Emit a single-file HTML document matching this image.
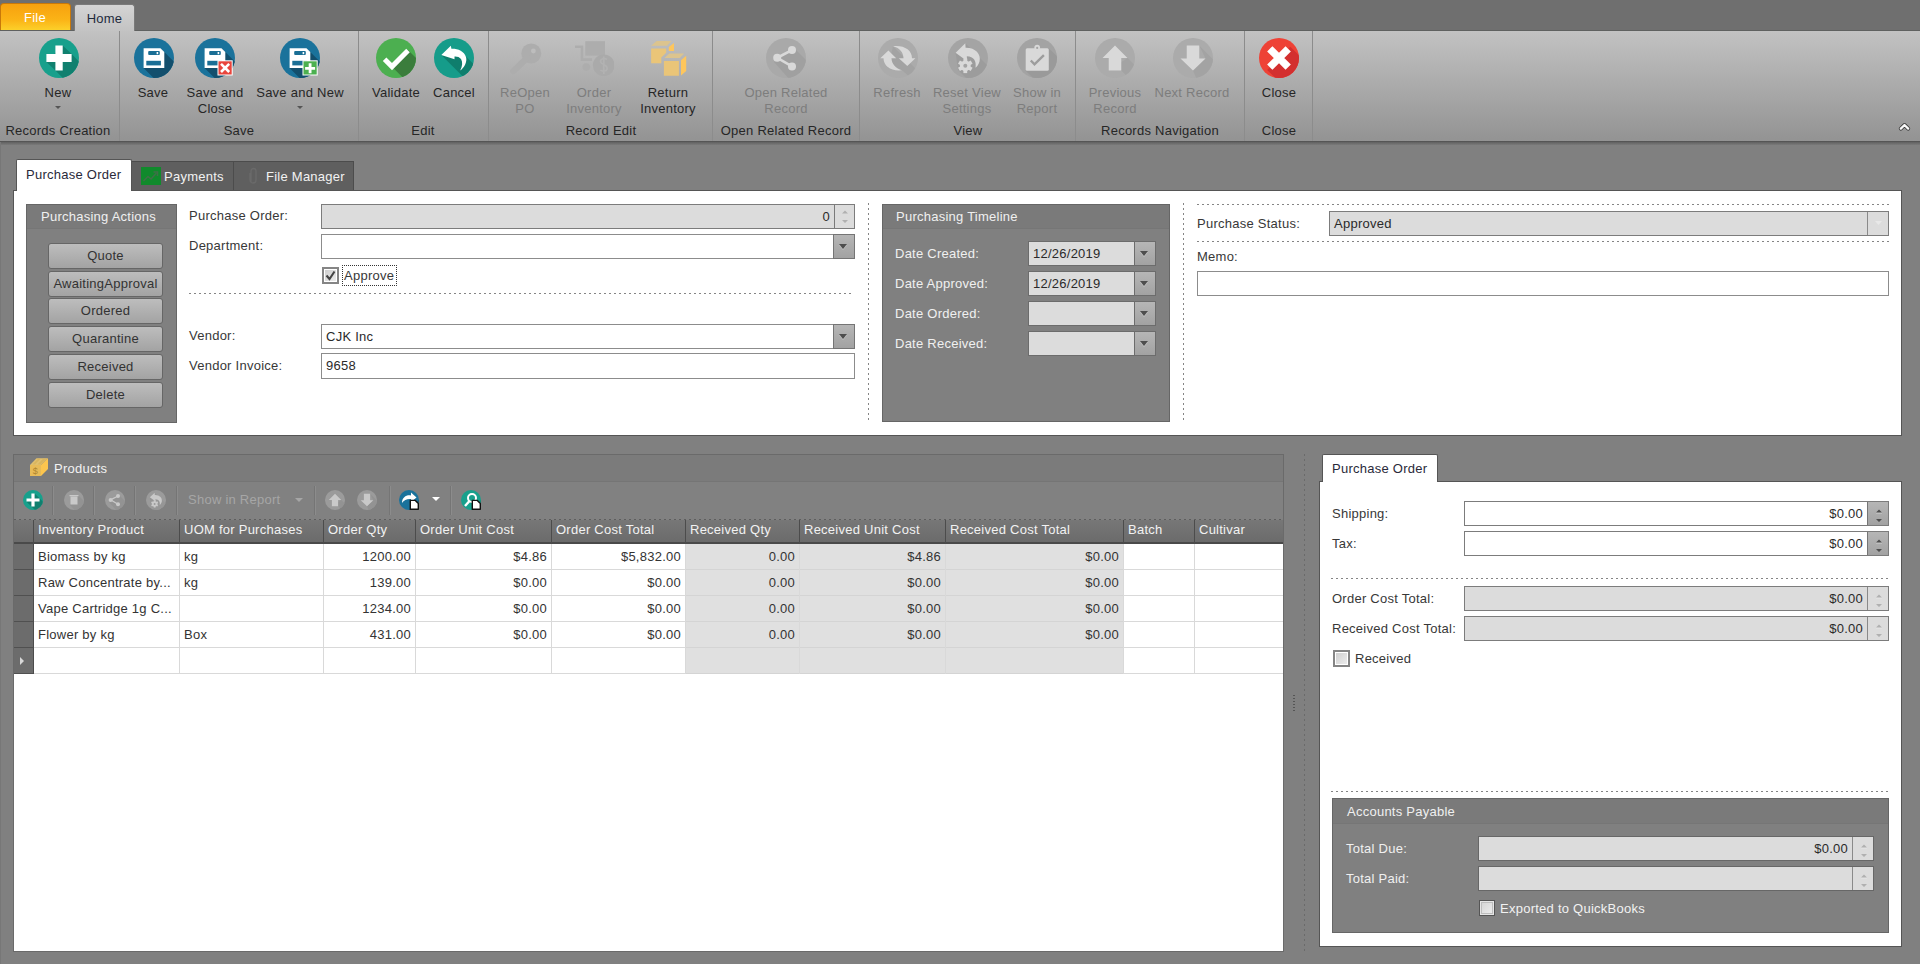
<!DOCTYPE html>
<html><head><meta charset="utf-8"><style>
*{box-sizing:border-box;margin:0;padding:0}
html,body{width:1920px;height:964px;overflow:hidden;background:#808080;font-family:"Liberation Sans",sans-serif;font-size:13px;color:#2a2a2a;letter-spacing:0.25px}
.a{position:absolute}
.t{position:absolute;white-space:nowrap;line-height:16px}
.c{text-align:center}
.r{text-align:right}
#top{left:0;top:0;width:1920px;height:31px;background:#6f6f6f}
#ribbon{left:0;top:30px;width:1920px;height:112px;background:linear-gradient(#c2c2c2,#939393);border-top:1px solid #5f6160;border-bottom:1px solid #555}
.sep{position:absolute;top:31px;width:1px;height:110px;background:#8c8c8c}
.lbl{position:absolute;line-height:16px;text-align:center;white-space:nowrap;color:#262626}
.dis{color:#7d7d7d}
.glbl{position:absolute;top:123px;line-height:16px;text-align:center;white-space:nowrap;color:#262626}
.ico{position:absolute;width:40px;height:40px;top:38px}
.page{position:absolute;background:#fff;border:1px solid #555}
.grp{position:absolute;background:#808080;border:1px solid #666}
.grph{position:absolute;left:0;top:0;right:0;height:24px;background:#7a7a7a;border-bottom:1px solid #767676;color:#f0f0f0;line-height:23px}
.btn{position:absolute;left:21px;width:115px;height:26px;border:1px solid #666;border-radius:3px;background:linear-gradient(#bdbdbd,#a3a3a3);text-align:center;line-height:24px;color:#333}
.fld{position:absolute;height:25px;border:1px solid #8c8c8c;background:#fff;line-height:23px;padding:0 4px;white-space:nowrap}
.fldd{background:#dcdcdc;border-color:#7c7c7c}
.flbl{position:absolute;line-height:24px;white-space:nowrap;color:#383838}
.wl{color:#f0f0f0}
.dd{position:absolute;right:-1px;top:-1px;bottom:-1px;width:22px;background:linear-gradient(#b6b6b6,#a2a2a2);border:1px solid #757575}
.dd:after{content:"";position:absolute;left:5px;top:9px;border-left:4.5px solid transparent;border-right:4.5px solid transparent;border-top:5px solid #4e4e4e;filter:drop-shadow(0 1px 0 #c4c4c4)}
.spin{position:absolute;right:0;top:0;bottom:0;width:20px;border-left:1px solid #b8b8b8}
.dotsh{position:absolute;height:1px;background-image:linear-gradient(90deg,#858585 2px,transparent 2px);background-size:5px 1px}
.dotsv{position:absolute;width:1px;background-image:linear-gradient(#858585 2px,transparent 2px);background-size:1px 5px}
</style></head><body>
<div id="top" class="a"></div>
<div id="ribbon" class="a"></div>
<div class="a" style="left:0px;top:3px;width:71px;height:27px;border-radius:4px 4px 0 0;background:linear-gradient(#f7a10e,#fbb316 60%,#fcd02a);border:1px solid #c8780a;border-bottom:none"></div>
<div class="t c" style="left:0px;top:10px;width:70px;color:#fff">File</div>
<div class="a" style="left:74px;top:4px;width:61px;height:27px;border-radius:3px 3px 0 0;background:linear-gradient(#d4d4d4,#c3c3c3);border:1px solid #7a7a7a;border-bottom:none"></div>
<div class="t c" style="left:74px;top:11px;width:61px;color:#1e2a3c">Home</div>
<div class="sep" style="left:119px"></div>
<div class="sep" style="left:358px"></div>
<div class="sep" style="left:488px"></div>
<div class="sep" style="left:712px"></div>
<div class="sep" style="left:859px"></div>
<div class="sep" style="left:1075px"></div>
<div class="sep" style="left:1244px"></div>
<div class="sep" style="left:1312px"></div>
<div class="glbl" style="left:-42px;width:200px">Records Creation</div>
<div class="glbl" style="left:139px;width:200px">Save</div>
<div class="glbl" style="left:323px;width:200px">Edit</div>
<div class="glbl" style="left:501px;width:200px">Record Edit</div>
<div class="glbl" style="left:686px;width:200px">Open Related Record</div>
<div class="glbl" style="left:868px;width:200px">View</div>
<div class="glbl" style="left:1060px;width:200px">Records Navigation</div>
<div class="glbl" style="left:1179px;width:200px">Close</div>
<div class="lbl" style="left:-2px;top:85px;width:120px">New</div>
<div class="a" style="left:55px;top:106px;border-left:3px solid transparent;border-right:3px solid transparent;border-top:3px solid #555"></div>
<div class="lbl" style="left:93px;top:85px;width:120px">Save</div>
<div class="lbl" style="left:155px;top:85px;width:120px">Save and</div>
<div class="lbl" style="left:155px;top:101px;width:120px">Close</div>
<div class="lbl" style="left:240px;top:85px;width:120px">Save and New</div>
<div class="a" style="left:297px;top:106px;border-left:3px solid transparent;border-right:3px solid transparent;border-top:3px solid #555"></div>
<div class="lbl" style="left:336px;top:85px;width:120px">Validate</div>
<div class="lbl" style="left:394px;top:85px;width:120px">Cancel</div>
<div class="lbl dis" style="left:465px;top:85px;width:120px">ReOpen</div>
<div class="lbl dis" style="left:465px;top:101px;width:120px">PO</div>
<div class="lbl dis" style="left:534px;top:85px;width:120px">Order</div>
<div class="lbl dis" style="left:534px;top:101px;width:120px">Inventory</div>
<div class="lbl" style="left:608px;top:85px;width:120px">Return</div>
<div class="lbl" style="left:608px;top:101px;width:120px">Inventory</div>
<div class="lbl dis" style="left:726px;top:85px;width:120px">Open Related</div>
<div class="lbl dis" style="left:726px;top:101px;width:120px">Record</div>
<div class="lbl dis" style="left:837px;top:85px;width:120px">Refresh</div>
<div class="lbl dis" style="left:907px;top:85px;width:120px">Reset View</div>
<div class="lbl dis" style="left:907px;top:101px;width:120px">Settings</div>
<div class="lbl dis" style="left:977px;top:85px;width:120px">Show in</div>
<div class="lbl dis" style="left:977px;top:101px;width:120px">Report</div>
<div class="lbl dis" style="left:1055px;top:85px;width:120px">Previous</div>
<div class="lbl dis" style="left:1055px;top:101px;width:120px">Record</div>
<div class="lbl dis" style="left:1132px;top:85px;width:120px">Next Record</div>
<div class="lbl" style="left:1219px;top:85px;width:120px">Close</div>
<svg class="ico" style="left:38.5px" viewBox="0 0 40 40"><defs><clipPath id="c1"><circle cx="20" cy="20" r="20"/></clipPath></defs><circle cx="20" cy="20" r="20" fill="#17a08c"/><g clip-path="url(#c1)"><path d="M23.7 7.4 L32.6 16 L62.6 46 L46.4 62.6 L16.4 32.6 L7.4 24 Z" fill="#10806f"/></g><path d="M16.4 7.4H23.7V16H32.6V24H23.7V32.6H16.4V24H7.4V16H16.4Z" fill="#fff"/></svg>
<svg class="ico" style="left:133.75px" viewBox="0 0 40 40"><defs><clipPath id="c2"><circle cx="20" cy="20" r="20"/></clipPath></defs><circle cx="20" cy="20" r="20" fill="#1a729b"/><g clip-path="url(#c2)"><path d="M26.5 10.2 L30.3 14 L60.3 44 L39.6 60 L9.6 30 Z" fill="#134f6d"/></g><g transform="translate(0,0)"><path d="M9.6 10.2H26.5L30.3 14V30H9.6Z" fill="#fff"/><rect x="14.2" y="13.1" width="11.6" height="4" rx="1" fill="#1a6e95"/><rect x="22.6" y="14" width="1.6" height="2.2" fill="#fff"/><rect x="12.3" y="22.8" width="14.6" height="4.6" fill="#1a6e95"/></g></svg>
<svg class="ico" style="left:195px" viewBox="0 0 40 40"><defs><clipPath id="c3"><circle cx="20" cy="20" r="20"/></clipPath></defs><circle cx="20" cy="20" r="20" fill="#1a729b"/><g clip-path="url(#c3)"><path d="M26.5 10.2 L30.3 14 L60.3 44 L39.6 60 L9.6 30 Z" fill="#134f6d"/></g><g transform="translate(0,0)"><path d="M9.6 10.2H26.5L30.3 14V30H9.6Z" fill="#fff"/><rect x="14.2" y="13.1" width="11.6" height="4" rx="1" fill="#1a6e95"/><rect x="22.6" y="14" width="1.6" height="2.2" fill="#fff"/><rect x="12.3" y="22.8" width="14.6" height="4.6" fill="#1a6e95"/></g><rect x="22.5" y="22.3" width="15.2" height="15.2" fill="#fff"/><rect x="23.5" y="23.3" width="13.2" height="13.2" fill="#e8453c"/><path d="M26 25.8L34.2 34M34.2 25.8L26 34" stroke="#fff" stroke-width="2.6"/></svg>
<svg class="ico" style="left:280px" viewBox="0 0 40 40"><defs><clipPath id="c4"><circle cx="20" cy="20" r="20"/></clipPath></defs><circle cx="20" cy="20" r="20" fill="#1a729b"/><g clip-path="url(#c4)"><path d="M26.5 10.2 L30.3 14 L60.3 44 L39.6 60 L9.6 30 Z" fill="#134f6d"/></g><g transform="translate(0,0)"><path d="M9.6 10.2H26.5L30.3 14V30H9.6Z" fill="#fff"/><rect x="14.2" y="13.1" width="11.6" height="4" rx="1" fill="#1a6e95"/><rect x="22.6" y="14" width="1.6" height="2.2" fill="#fff"/><rect x="12.3" y="22.8" width="14.6" height="4.6" fill="#1a6e95"/></g><rect x="22.5" y="22.3" width="15.2" height="15.2" fill="#fff"/><rect x="23.5" y="23.3" width="13.2" height="13.2" fill="#4cb050"/><path d="M30.1 25.3V35.3M25.1 30.3H35.1" stroke="#fff" stroke-width="2.8"/></svg>
<svg class="ico" style="left:376px" viewBox="0 0 40 40"><defs><clipPath id="c5"><circle cx="20" cy="20" r="20"/></clipPath></defs><circle cx="20" cy="20" r="20" fill="#4caf50"/><g clip-path="url(#c5)"><path d="M32 12 L62 42 L46 58.75 L16 28.75 Z" fill="#3b7d3c"/></g><path d="M8.6 21.2 L16 28.6 L32 12.4" fill="none" stroke="#fff" stroke-width="5"/></svg>
<svg class="ico" style="left:434px" viewBox="0 0 40 40"><defs><clipPath id="c6"><circle cx="20" cy="20" r="20"/></clipPath></defs><circle cx="20" cy="20" r="20" fill="#159c8a"/><g clip-path="url(#c6)"><path d="M7.3 16.9 L17.4 11.4 L26.4 13 L31 17.5 L61 47.5 L37.3 46.9 Z" fill="#0f7e6d"/></g><path d="M7.3 16.9 L16.85 7.85 L17.4 10.7 C24 10.5 30 13 32 19 C33.5 24 30 30 26.2 32.5 C28.5 28 28.8 24 27 21 C25.5 19 23 18.3 20.5 18.5 L20.5 21.35 Z" fill="#fff"/></svg>
<svg class="ico" style="left:506px" viewBox="0 0 40 40"><circle cx="25.25" cy="15.4" r="10" fill="#adadad"/><circle cx="27.4" cy="13" r="2.4" fill="#bdbdbd"/><path d="M21 20 L7.5 33" stroke="#adadad" stroke-width="6.5" stroke-linecap="round"/></svg>
<svg class="ico" style="left:574px" viewBox="0 0 40 40"><rect x="11.25" y="3.2" width="19.75" height="14.4" fill="#adadad"/><path d="M1 8.7 H8 V21.6 H18" fill="none" stroke="#adadad" stroke-width="2.6"/><circle cx="12.25" cy="29.1" r="3.8" fill="#adadad"/><circle cx="29.75" cy="27.25" r="10.8" fill="#aaaaaa"/><path d="M33 21.5 C31 20 26.5 20.2 26.5 23.3 C26.5 27 33.2 26 33.2 30.2 C33.2 33.5 28.5 33.8 26.3 32 M29.75 18.5 V36" fill="none" stroke="#b2b2b2" stroke-width="1.6"/></svg>
<svg class="ico" style="left:648px" viewBox="0 0 40 40"><path d="M3.15 7.67 L8.6 3 H23.6 L19 7.67Z" fill="#dcc48e"/><path d="M3.15 10.5 H18.2 V14.8 L13.3 19.5 V25.3 H3.15Z" fill="#eac578"/><path d="M20.8 9 L26 5.1 V12.9 H20.8Z" fill="#fec65c"/><path d="M16.4 20.1 L21.3 15.45 H36.1 L31.7 20.1Z" fill="#dcc48e"/><rect x="15.9" y="23" width="15" height="14.75" fill="#eac578"/><path d="M33 22.2 L38.2 17.8 V33.1 L33 37.5Z" fill="#fec65c"/></svg>
<svg class="ico" style="left:766px" viewBox="0 0 40 40"><defs><clipPath id="c7"><circle cx="20" cy="20" r="20"/></clipPath></defs><circle cx="20" cy="20" r="20" fill="#a9a9a9"/><g clip-path="url(#c7)"><path d="M26 8 L56 38 L40 60 L8 24 Z" fill="#a0a0a0"/></g><path d="M26 12 L11.2 19.8 L26 28.4" fill="none" stroke="#d9d9d9" stroke-width="2.6"/><circle cx="26" cy="12" r="4" fill="#d9d9d9"/><circle cx="11.2" cy="19.8" r="4" fill="#d9d9d9"/><circle cx="26" cy="28.4" r="4" fill="#d9d9d9"/></svg>
<svg class="ico" style="left:877.5px" viewBox="0 0 40 40"><defs><clipPath id="c8"><circle cx="20" cy="20" r="20"/></clipPath></defs><circle cx="20" cy="20" r="20" fill="#ababab"/><g clip-path="url(#c8)"><path d="M15 8.2 L45 38 L54 58 L24 32.3 L10 30 Z" fill="#a3a3a3"/></g><path d="M15 8.2 C26 7 34 12 34 20.3 L37.4 20.3 L29.3 28.1 L20.8 20.3 L25.5 20.3 C25.5 14 21 9.5 15 8.2 Z" fill="#d9d9d9"/><path d="M24 32.3 C13 33.5 5.5 28 5.5 20.3 L2.3 20.3 L10.4 12.4 L18.2 20.3 L13.5 20.3 C13.5 26 18 30.5 24 32.3 Z" fill="#d9d9d9"/></svg>
<svg class="ico" style="left:947.5px" viewBox="0 0 40 40"><defs><clipPath id="c9"><circle cx="20" cy="20" r="20"/></clipPath></defs><circle cx="20" cy="20" r="20" fill="#a4a4a4"/><g clip-path="url(#c9)"><path d="M17.3 5.3 L47 35 L40 62 L10 32 L7.6 14.7 Z" fill="#9c9c9c"/></g><path d="M7.6 14.7 L17.3 5.3 L17.6 9.8 C27 9.5 33.5 16 31.5 23.5 C30.5 27 29 28.5 27.5 29.8 C28.5 23 26 18.5 18.8 18.3 L19.2 23.2 Z" fill="#d9d9d9"/><g transform="translate(17.3 27.8)"><rect x="-1.9" y="-7.3" width="3.8" height="14.6" fill="#d9d9d9" transform="rotate(0)"/><rect x="-1.9" y="-7.3" width="3.8" height="14.6" fill="#d9d9d9" transform="rotate(60)"/><rect x="-1.9" y="-7.3" width="3.8" height="14.6" fill="#d9d9d9" transform="rotate(120)"/><circle r="5.4" fill="#d9d9d9"/><circle r="2" fill="#a4a4a4"/></g></svg>
<svg class="ico" style="left:1017px" viewBox="0 0 40 40"><defs><clipPath id="c10"><circle cx="20" cy="20" r="20"/></clipPath></defs><circle cx="20" cy="20" r="20" fill="#a3a3a3"/><g clip-path="url(#c10)"><path d="M31.8 10.2 L61.8 40 L38.7 63 L8.7 32.8 Z" fill="#9a9a9a"/></g><rect x="8.7" y="10.2" width="23.1" height="22.6" rx="1.5" fill="#d9d9d9"/><circle cx="20.2" cy="9.6" r="2.8" fill="#d9d9d9"/><circle cx="20.2" cy="9.9" r="1.1" fill="#a3a3a3"/><path d="M13.8 22.5 L17.5 26.3 L26.9 17.2" fill="none" stroke="#9c9c9c" stroke-width="2.4"/></svg>
<svg class="ico" style="left:1095px" viewBox="0 0 40 40"><defs><clipPath id="c11"><circle cx="20" cy="20" r="20"/></clipPath></defs><circle cx="20" cy="20" r="20" fill="#ababab"/><g clip-path="url(#c11)"><path d="M32.5 20 L62.5 50 L56 62 L26.25 32.5 L14 32.5 Z" fill="#a3a3a3"/></g><path d="M20 7.5 L32.5 20 H26.25 V32.5 H13.75 V20 H7.5 Z" fill="#d9d9d9"/></svg>
<svg class="ico" style="left:1172.5px" viewBox="0 0 40 40"><defs><clipPath id="c12"><circle cx="20" cy="20" r="20"/></clipPath></defs><circle cx="20" cy="20" r="20" fill="#ababab"/><g clip-path="url(#c12)"><path d="M26.25 7.5 L56 37 L32.5 62 L20 32.5 L32.5 20.6 Z" fill="#a3a3a3"/></g><path d="M13.75 7.5 H26.25 V20.6 H32.5 L20 32.5 L7.5 20.6 H13.75 Z" fill="#d9d9d9"/></svg>
<svg class="ico" style="left:1259px" viewBox="0 0 40 40"><defs><clipPath id="c13"><circle cx="20" cy="20" r="20"/></clipPath></defs><circle cx="20" cy="20" r="20" fill="#ee4236"/><g clip-path="url(#c13)"><path d="M31.25 8.75 L61 38 L38 61 L8.1 31.9 Z" fill="#d32f2f"/></g><path d="M10.8 10.8 L29.2 29.2 M29.2 10.8 L10.8 29.2" stroke="#fff" stroke-width="7.5"/></svg>
<svg class="a" style="left:1898px;top:121px" width="13" height="11" viewBox="0 0 13 11"><path d="M2.8 7.6 L6.5 4 L10.2 7.6" fill="none" stroke="#3a3a3a" stroke-width="3.9" stroke-linecap="round" stroke-linejoin="round"/><path d="M2.8 7.6 L6.5 4 L10.2 7.6" fill="none" stroke="#fafafa" stroke-width="2.3" stroke-linecap="round" stroke-linejoin="round"/></svg>
<div class="a" style="left:0;top:142px;width:1920px;height:3px;background:linear-gradient(#606060,#7a7a7a)"></div>
<div class="a" style="left:0;top:142px;width:1px;height:822px;background:#777"></div>
<div class="a" style="left:131px;top:161px;width:103px;height:30px;background:#5f5f5f;border:1px solid #4c4c4c;border-bottom:none"></div>
<div class="a" style="left:233px;top:161px;width:121px;height:30px;background:#5f5f5f;border:1px solid #4c4c4c;border-bottom:none"></div>
<svg class="a" style="left:141px;top:167px" width="20" height="18" viewBox="0 0 20 18"><rect width="20" height="18" fill="#108a2c"/><path d="M2.5 14 L7 9.5 L10 12 L15.5 6" fill="none" stroke="#3f7048" stroke-width="1.5"/><path d="M12.5 5 H16.5 V9" fill="none" stroke="#3f7048" stroke-width="1.5"/></svg>
<div class="t" style="left:164px;top:169px;color:#f2f2f2">Payments</div>
<svg class="a" style="left:248px;top:167px" width="10" height="18" viewBox="0 0 10 18"><path d="M3 15 V4 A2.5 2.5 0 0 1 8 4 V13 A3 3 0 0 1 2 13 V6" fill="none" stroke="#6a6a6a" stroke-width="1.3"/></svg>
<div class="t" style="left:266px;top:169px;color:#f2f2f2">File Manager</div>
<div class="page" style="left:13px;top:190px;width:1889px;height:246px"></div>
<div class="a" style="left:16px;top:159px;width:116px;height:32px;background:#fff;border:1px solid #555;border-bottom:none;border-radius:2px 2px 0 0"></div>
<div class="t" style="left:26px;top:167px;color:#2a2a3a">Purchase Order</div>
<div class="grp" style="left:26px;top:204px;width:151px;height:219px"><div class="grph" style="padding-left:14px">Purchasing Actions</div>
<div class="btn" style="top:38px">Quote</div>
<div class="btn" style="top:66px">AwaitingApproval</div>
<div class="btn" style="top:93px">Ordered</div>
<div class="btn" style="top:121px">Quarantine</div>
<div class="btn" style="top:149px">Received</div>
<div class="btn" style="top:177px">Delete</div>
</div>
<div class="flbl " style="left:189px;top:204px;height:24px;line-height:24px">Purchase Order:</div>
<div class="fld fldd" style="left:321px;top:204px;width:534px;height:25px;text-align:right;padding-right:24px">0<div class="spin" style="background:#dcdcdc;border-left-color:#7a7a7a"></div></div>
<svg class="a" style="left:839px;top:207px" width="12" height="18" viewBox="0 0 12 18"><path d="M3 6.5 H9 L6 3.5Z M3 13 H9 L6 16Z" fill="#b0b0b0"/></svg>
<div class="flbl " style="left:189px;top:234px;height:24px;line-height:24px">Department:</div>
<div class="fld" style="left:321px;top:234px;width:534px;height:25px"><div class="dd"></div></div>
<div class="a" style="left:322px;top:267px;width:17px;height:17px;border:2px solid #858585;background:#fff"><div class="a" style="left:1px;top:1px;width:11px;height:11px;background:linear-gradient(135deg,#cfcfcf,#ececec)"></div></div>
<svg class="a" style="left:324px;top:269px" width="13" height="13" viewBox="0 0 13 13"><path d="M2.5 6.5 L5.5 10 L10.5 2.5" fill="none" stroke="#444" stroke-width="2.1"/></svg>
<div class="a" style="left:342px;top:265px;width:55px;height:21px;border:1px dotted #333;border-radius:1px"></div>
<div class="t" style="left:344px;top:268px;color:#383838">Approve</div>
<div class="dotsh" style="left:189px;top:293px;width:664px"></div>
<div class="flbl " style="left:189px;top:324px;height:24px;line-height:24px">Vendor:</div>
<div class="fld" style="left:321px;top:324px;width:534px;height:25px">CJK Inc<div class="dd"></div></div>
<div class="flbl " style="left:189px;top:354px;height:24px;line-height:24px">Vendor Invoice:</div>
<div class="fld" style="left:321px;top:353px;width:534px;height:26px">9658</div>
<div class="dotsv" style="left:868px;top:203px;height:218px"></div>
<div class="grp" style="left:882px;top:204px;width:288px;height:218px"><div class="grph" style="padding-left:13px">Purchasing Timeline</div></div>
<div class="flbl wl" style="left:895px;top:241px;height:25px;line-height:25px">Date Created:</div>
<div class="fld fldd" style="left:1028px;top:241px;width:128px;height:25px;border-color:#6c6c6c">12/26/2019<div class="dd" style="border-color:#6c6c6c"></div></div>
<div class="flbl wl" style="left:895px;top:271px;height:25px;line-height:25px">Date Approved:</div>
<div class="fld fldd" style="left:1028px;top:271px;width:128px;height:25px;border-color:#6c6c6c">12/26/2019<div class="dd" style="border-color:#6c6c6c"></div></div>
<div class="flbl wl" style="left:895px;top:301px;height:25px;line-height:25px">Date Ordered:</div>
<div class="fld fldd" style="left:1028px;top:301px;width:128px;height:25px;border-color:#6c6c6c"><div class="dd" style="border-color:#6c6c6c"></div></div>
<div class="flbl wl" style="left:895px;top:331px;height:25px;line-height:25px">Date Received:</div>
<div class="fld fldd" style="left:1028px;top:331px;width:128px;height:25px;border-color:#6c6c6c"><div class="dd" style="border-color:#6c6c6c"></div></div>
<div class="dotsv" style="left:1183px;top:203px;height:218px"></div>
<div class="dotsh" style="left:1197px;top:204px;width:692px"></div>
<div class="flbl " style="left:1197px;top:211px;height:25px;line-height:25px">Purchase Status:</div>
<div class="fld fldd" style="left:1329px;top:211px;width:560px;height:25px;line-height:23px">Approved<div class="spin" style="width:21px;border-left-color:#8a8a8a"></div></div>
<svg class="a" style="left:1874px;top:220px" width="9" height="6" viewBox="0 0 9 6"><path d="M1 1 H8 L4.5 5 Z" fill="#e8e8e8"/></svg>
<div class="dotsh" style="left:1197px;top:241px;width:692px"></div>
<div class="flbl " style="left:1197px;top:246px;height:22px;line-height:22px">Memo:</div>
<div class="fld" style="left:1197px;top:271px;width:692px;height:25px"></div>
<div class="grp" style="left:13px;top:454px;width:1271px;height:498px;background:#fff;border-color:#6a6a6a"></div>
<div class="a" style="left:14px;top:455px;width:1269px;height:27px;background:#7b7b7b;border-bottom:1px solid #757575"></div>
<div class="a" style="left:14px;top:482px;width:1269px;height:38px;background:#818181"></div>
<div class="dotsh" style="left:14px;top:519px;width:1269px;background-image:linear-gradient(90deg,#5e5e5e 2px,transparent 2px)"></div>
<svg class="a" style="left:29px;top:457px" width="20" height="20" viewBox="0 0 20 20"><path d="M1 8 L7.5 1.3 H19 L12 8Z" fill="#e2c06e"/><path d="M3.5 7.6 L9 1.8 H11.5 L6 7.6Z M8.5 7.6 L14 1.8 H17.5 L11.5 7.6Z" fill="#d9b55e"/><path d="M12 8 L19 1.3 V12 L12 19Z" fill="#fcc54e"/><rect x="1" y="8" width="11" height="11" fill="#e8bb58"/><text x="6.5" y="17" font-size="9" text-anchor="middle" fill="#b08630" font-family="Liberation Sans">$</text></svg>
<div class="t" style="left:54px;top:461px;color:#f2f2f2">Products</div>
<div class="a" style="left:52px;top:486px;width:1px;height:29px;background:#757575;box-shadow:1px 0 0 #8c8c8c"></div>
<div class="a" style="left:93px;top:486px;width:1px;height:29px;background:#757575;box-shadow:1px 0 0 #8c8c8c"></div>
<div class="a" style="left:134px;top:486px;width:1px;height:29px;background:#757575;box-shadow:1px 0 0 #8c8c8c"></div>
<div class="a" style="left:176px;top:486px;width:1px;height:29px;background:#757575;box-shadow:1px 0 0 #8c8c8c"></div>
<div class="a" style="left:314px;top:486px;width:1px;height:29px;background:#757575;box-shadow:1px 0 0 #8c8c8c"></div>
<div class="a" style="left:389px;top:486px;width:1px;height:29px;background:#757575;box-shadow:1px 0 0 #8c8c8c"></div>
<div class="a" style="left:450px;top:486px;width:1px;height:29px;background:#757575;box-shadow:1px 0 0 #8c8c8c"></div>
<svg class="a" style="left:22.5px;top:490px" width="20" height="20" viewBox="0 0 40 40"><defs><clipPath id="c14"><circle cx="20" cy="20" r="20"/></clipPath></defs><circle cx="20" cy="20" r="20" fill="#17a08c"/><g clip-path="url(#c14)"><path d="M23.7 7.4 L32.6 16 L62.6 46 L46.4 62.6 L16.4 32.6 L7.4 24 Z" fill="#10806f"/></g><path d="M16.8 7 H23.2 V16.8 H33 V23.2 H23.2 V33 H16.8 V23.2 H7 V16.8 H16.8Z" fill="#fff"/></svg>
<svg class="a" style="left:63.5px;top:490px" width="20" height="20" viewBox="0 0 40 40"><defs><clipPath id="c15"><circle cx="20" cy="20" r="20"/></clipPath></defs><circle cx="20" cy="20" r="20" fill="#9b9b9b"/><g clip-path="url(#c15)"><path d="M28 10 L58 40 L40 60 L12 30 Z" fill="#939393"/></g><rect x="13" y="13" width="14" height="16" fill="#c9c9c9"/><rect x="11" y="10" width="18" height="2.5" fill="#c9c9c9"/></svg>
<svg class="a" style="left:104.5px;top:490px" width="20" height="20" viewBox="0 0 40 40"><defs><clipPath id="c16"><circle cx="20" cy="20" r="20"/></clipPath></defs><circle cx="20" cy="20" r="20" fill="#9b9b9b"/><g clip-path="url(#c16)"><path d="M26 8 L56 38 L40 60 L8 24 Z" fill="#939393"/></g><path d="M26 12 L11.2 19.8 L26 28.4" fill="none" stroke="#c9c9c9" stroke-width="2.6"/><circle cx="26" cy="12" r="4" fill="#c9c9c9"/><circle cx="11.2" cy="19.8" r="4" fill="#c9c9c9"/><circle cx="26" cy="28.4" r="4" fill="#c9c9c9"/></svg>
<svg class="a" style="left:145.5px;top:490px" width="20" height="20" viewBox="0 0 40 40"><defs><clipPath id="c17"><circle cx="20" cy="20" r="20"/></clipPath></defs><circle cx="20" cy="20" r="20" fill="#9b9b9b"/><g clip-path="url(#c17)"><path d="M17.3 5.3 L47 35 L40 62 L10 32 L7.6 14.7 Z" fill="#969696"/></g><path d="M7.6 14.7 L17.3 5.3 L17.6 9.8 C27 9.5 33.5 16 31.5 23.5 C30.5 27 29 28.5 27.5 29.8 C28.5 23 26 18.5 18.8 18.3 L19.2 23.2 Z" fill="#c9c9c9"/><g transform="translate(17.3 27.8)"><rect x="-1.9" y="-7.3" width="3.8" height="14.6" fill="#c9c9c9" transform="rotate(0)"/><rect x="-1.9" y="-7.3" width="3.8" height="14.6" fill="#c9c9c9" transform="rotate(60)"/><rect x="-1.9" y="-7.3" width="3.8" height="14.6" fill="#c9c9c9" transform="rotate(120)"/><circle r="5.4" fill="#c9c9c9"/><circle r="2" fill="#9b9b9b"/></g></svg>
<div class="t" style="left:188px;top:492px;color:#a6a6a6">Show in Report</div>
<div class="a" style="left:295px;top:498px;border-left:4px solid transparent;border-right:4px solid transparent;border-top:4px solid #a6a6a6"></div>
<svg class="a" style="left:325px;top:490px" width="20" height="20" viewBox="0 0 40 40"><defs><clipPath id="c18"><circle cx="20" cy="20" r="20"/></clipPath></defs><circle cx="20" cy="20" r="20" fill="#9b9b9b"/><g clip-path="url(#c18)"><path d="M32.5 20 L62.5 50 L56 62 L26.25 32.5 L14 32.5 Z" fill="#939393"/></g><path d="M20 7.5 L32.5 20 H26.25 V32.5 H13.75 V20 H7.5 Z" fill="#c9c9c9"/></svg>
<svg class="a" style="left:357px;top:490px" width="20" height="20" viewBox="0 0 40 40"><defs><clipPath id="c19"><circle cx="20" cy="20" r="20"/></clipPath></defs><circle cx="20" cy="20" r="20" fill="#9b9b9b"/><g clip-path="url(#c19)"><path d="M26.25 7.5 L56 37 L32.5 62 L20 32.5 L32.5 20.6 Z" fill="#939393"/></g><path d="M13.75 7.5 H26.25 V20.6 H32.5 L20 32.5 L7.5 20.6 H13.75 Z" fill="#c9c9c9"/></svg>
<svg class="a" style="left:398px;top:489px" width="26" height="24" viewBox="0 0 26 24"><circle cx="11" cy="11" r="10" fill="#1a729b"/><path d="M11 21 L21 11 A10 10 0 0 1 11 21Z" fill="#134f6d"/><path d="M4 14 C4 8 9 5.5 13 6.5 L13 3.5 L18.5 8.5 L13 13 L13 10 C9.5 9.5 6 11 4 14Z" fill="#fff"/><path d="M12.3 11.4 H17.3 L20.3 14.4 V20.3 H12.3Z" fill="#fff" stroke="#111" stroke-width="1.4" stroke-linejoin="round"/></svg>
<div class="a" style="left:432px;top:497px;border-left:4px solid transparent;border-right:4px solid transparent;border-top:4px solid #fff"></div>
<svg class="a" style="left:460px;top:489px" width="26" height="24" viewBox="0 0 26 24"><circle cx="11" cy="11" r="10" fill="#17a08c"/><path d="M11 21 L21 11 A10 10 0 0 1 11 21Z" fill="#10806f"/><circle cx="12" cy="9" r="4" fill="none" stroke="#fff" stroke-width="2"/><path d="M9.5 12 L5 17" stroke="#fff" stroke-width="2.4"/><path d="M12.3 11.4 H17.3 L20.3 14.4 V20.3 H12.3Z" fill="#fff" stroke="#111" stroke-width="1.4" stroke-linejoin="round"/></svg>
<div class="a" style="left:14px;top:520px;width:19px;height:154px;background:#6c6c6c"></div><div class="a" style="left:14px;top:520px;width:19px;height:22px;background:linear-gradient(#777,#6b6b6b)"></div>
<div class="a" style="left:33px;top:520px;width:1250px;height:24px;background:linear-gradient(#777,#6b6b6b);border-bottom:2px solid #4a4a4a"></div>
<div class="a" style="left:14px;top:542px;width:19px;height:2px;background:#4a4a4a"></div>
<div class="a" style="left:33px;top:520px;width:1px;height:23px;background:#4c4c4c"></div>
<div class="t" style="left:38px;top:522px;color:#f2f2f2">Inventory Product</div>
<div class="a" style="left:179px;top:520px;width:1px;height:23px;background:#4c4c4c"></div>
<div class="t" style="left:184px;top:522px;color:#f2f2f2">UOM for Purchases</div>
<div class="a" style="left:323px;top:520px;width:1px;height:23px;background:#4c4c4c"></div>
<div class="t" style="left:328px;top:522px;color:#f2f2f2">Order Qty</div>
<div class="a" style="left:415px;top:520px;width:1px;height:23px;background:#4c4c4c"></div>
<div class="t" style="left:420px;top:522px;color:#f2f2f2">Order Unit Cost</div>
<div class="a" style="left:551px;top:520px;width:1px;height:23px;background:#4c4c4c"></div>
<div class="t" style="left:556px;top:522px;color:#f2f2f2">Order Cost Total</div>
<div class="a" style="left:685px;top:520px;width:1px;height:23px;background:#4c4c4c"></div>
<div class="t" style="left:690px;top:522px;color:#f2f2f2">Received Qty</div>
<div class="a" style="left:799px;top:520px;width:1px;height:23px;background:#4c4c4c"></div>
<div class="t" style="left:804px;top:522px;color:#f2f2f2">Received Unit Cost</div>
<div class="a" style="left:945px;top:520px;width:1px;height:23px;background:#4c4c4c"></div>
<div class="t" style="left:950px;top:522px;color:#f2f2f2">Received Cost Total</div>
<div class="a" style="left:1123px;top:520px;width:1px;height:23px;background:#4c4c4c"></div>
<div class="t" style="left:1128px;top:522px;color:#f2f2f2">Batch</div>
<div class="a" style="left:1194px;top:520px;width:1px;height:23px;background:#4c4c4c"></div>
<div class="t" style="left:1199px;top:522px;color:#f2f2f2">Cultivar</div>
<div class="a" style="left:33px;top:544px;width:1250px;height:26px;background:#fff;border-bottom:1px solid #d9d9d9"></div>
<div class="a" style="left:685px;top:544px;width:438px;height:26px;background:#e0e0e0;border-bottom:1px solid #d4d4d4"></div>
<div class="a" style="left:14px;top:569px;width:19px;height:1px;background:#505050"></div>
<div class="t" style="left:38px;top:549px;color:#333">Biomass by kg</div>
<div class="a" style="left:179px;top:544px;width:1px;height:26px;background:#d9d9d9"></div>
<div class="t" style="left:184px;top:549px;color:#333">kg</div>
<div class="a" style="left:323px;top:544px;width:1px;height:26px;background:#d9d9d9"></div>
<div class="t r" style="left:323px;top:549px;width:88px;color:#333">1200.00</div>
<div class="a" style="left:415px;top:544px;width:1px;height:26px;background:#d9d9d9"></div>
<div class="t r" style="left:415px;top:549px;width:132px;color:#333">$4.86</div>
<div class="a" style="left:551px;top:544px;width:1px;height:26px;background:#d9d9d9"></div>
<div class="t r" style="left:551px;top:549px;width:130px;color:#333">$5,832.00</div>
<div class="a" style="left:685px;top:544px;width:1px;height:26px;background:#d9d9d9"></div>
<div class="t r" style="left:685px;top:549px;width:110px;color:#333">0.00</div>
<div class="a" style="left:799px;top:544px;width:1px;height:26px;background:#d9d9d9"></div>
<div class="t r" style="left:799px;top:549px;width:142px;color:#333">$4.86</div>
<div class="a" style="left:945px;top:544px;width:1px;height:26px;background:#d9d9d9"></div>
<div class="t r" style="left:945px;top:549px;width:174px;color:#333">$0.00</div>
<div class="a" style="left:1123px;top:544px;width:1px;height:26px;background:#d9d9d9"></div>
<div class="a" style="left:1194px;top:544px;width:1px;height:26px;background:#d9d9d9"></div>
<div class="a" style="left:33px;top:570px;width:1250px;height:26px;background:#fff;border-bottom:1px solid #d9d9d9"></div>
<div class="a" style="left:685px;top:570px;width:438px;height:26px;background:#e0e0e0;border-bottom:1px solid #d4d4d4"></div>
<div class="a" style="left:14px;top:595px;width:19px;height:1px;background:#505050"></div>
<div class="t" style="left:38px;top:575px;color:#333">Raw Concentrate by...</div>
<div class="a" style="left:179px;top:570px;width:1px;height:26px;background:#d9d9d9"></div>
<div class="t" style="left:184px;top:575px;color:#333">kg</div>
<div class="a" style="left:323px;top:570px;width:1px;height:26px;background:#d9d9d9"></div>
<div class="t r" style="left:323px;top:575px;width:88px;color:#333">139.00</div>
<div class="a" style="left:415px;top:570px;width:1px;height:26px;background:#d9d9d9"></div>
<div class="t r" style="left:415px;top:575px;width:132px;color:#333">$0.00</div>
<div class="a" style="left:551px;top:570px;width:1px;height:26px;background:#d9d9d9"></div>
<div class="t r" style="left:551px;top:575px;width:130px;color:#333">$0.00</div>
<div class="a" style="left:685px;top:570px;width:1px;height:26px;background:#d9d9d9"></div>
<div class="t r" style="left:685px;top:575px;width:110px;color:#333">0.00</div>
<div class="a" style="left:799px;top:570px;width:1px;height:26px;background:#d9d9d9"></div>
<div class="t r" style="left:799px;top:575px;width:142px;color:#333">$0.00</div>
<div class="a" style="left:945px;top:570px;width:1px;height:26px;background:#d9d9d9"></div>
<div class="t r" style="left:945px;top:575px;width:174px;color:#333">$0.00</div>
<div class="a" style="left:1123px;top:570px;width:1px;height:26px;background:#d9d9d9"></div>
<div class="a" style="left:1194px;top:570px;width:1px;height:26px;background:#d9d9d9"></div>
<div class="a" style="left:33px;top:596px;width:1250px;height:26px;background:#fff;border-bottom:1px solid #d9d9d9"></div>
<div class="a" style="left:685px;top:596px;width:438px;height:26px;background:#e0e0e0;border-bottom:1px solid #d4d4d4"></div>
<div class="a" style="left:14px;top:621px;width:19px;height:1px;background:#505050"></div>
<div class="t" style="left:38px;top:601px;color:#333">Vape Cartridge 1g C...</div>
<div class="a" style="left:179px;top:596px;width:1px;height:26px;background:#d9d9d9"></div>
<div class="a" style="left:323px;top:596px;width:1px;height:26px;background:#d9d9d9"></div>
<div class="t r" style="left:323px;top:601px;width:88px;color:#333">1234.00</div>
<div class="a" style="left:415px;top:596px;width:1px;height:26px;background:#d9d9d9"></div>
<div class="t r" style="left:415px;top:601px;width:132px;color:#333">$0.00</div>
<div class="a" style="left:551px;top:596px;width:1px;height:26px;background:#d9d9d9"></div>
<div class="t r" style="left:551px;top:601px;width:130px;color:#333">$0.00</div>
<div class="a" style="left:685px;top:596px;width:1px;height:26px;background:#d9d9d9"></div>
<div class="t r" style="left:685px;top:601px;width:110px;color:#333">0.00</div>
<div class="a" style="left:799px;top:596px;width:1px;height:26px;background:#d9d9d9"></div>
<div class="t r" style="left:799px;top:601px;width:142px;color:#333">$0.00</div>
<div class="a" style="left:945px;top:596px;width:1px;height:26px;background:#d9d9d9"></div>
<div class="t r" style="left:945px;top:601px;width:174px;color:#333">$0.00</div>
<div class="a" style="left:1123px;top:596px;width:1px;height:26px;background:#d9d9d9"></div>
<div class="a" style="left:1194px;top:596px;width:1px;height:26px;background:#d9d9d9"></div>
<div class="a" style="left:33px;top:622px;width:1250px;height:26px;background:#fff;border-bottom:1px solid #d9d9d9"></div>
<div class="a" style="left:685px;top:622px;width:438px;height:26px;background:#e0e0e0;border-bottom:1px solid #d4d4d4"></div>
<div class="a" style="left:14px;top:647px;width:19px;height:1px;background:#505050"></div>
<div class="t" style="left:38px;top:627px;color:#333">Flower by kg</div>
<div class="a" style="left:179px;top:622px;width:1px;height:26px;background:#d9d9d9"></div>
<div class="t" style="left:184px;top:627px;color:#333">Box</div>
<div class="a" style="left:323px;top:622px;width:1px;height:26px;background:#d9d9d9"></div>
<div class="t r" style="left:323px;top:627px;width:88px;color:#333">431.00</div>
<div class="a" style="left:415px;top:622px;width:1px;height:26px;background:#d9d9d9"></div>
<div class="t r" style="left:415px;top:627px;width:132px;color:#333">$0.00</div>
<div class="a" style="left:551px;top:622px;width:1px;height:26px;background:#d9d9d9"></div>
<div class="t r" style="left:551px;top:627px;width:130px;color:#333">$0.00</div>
<div class="a" style="left:685px;top:622px;width:1px;height:26px;background:#d9d9d9"></div>
<div class="t r" style="left:685px;top:627px;width:110px;color:#333">0.00</div>
<div class="a" style="left:799px;top:622px;width:1px;height:26px;background:#d9d9d9"></div>
<div class="t r" style="left:799px;top:627px;width:142px;color:#333">$0.00</div>
<div class="a" style="left:945px;top:622px;width:1px;height:26px;background:#d9d9d9"></div>
<div class="t r" style="left:945px;top:627px;width:174px;color:#333">$0.00</div>
<div class="a" style="left:1123px;top:622px;width:1px;height:26px;background:#d9d9d9"></div>
<div class="a" style="left:1194px;top:622px;width:1px;height:26px;background:#d9d9d9"></div>
<div class="a" style="left:33px;top:648px;width:1250px;height:26px;background:#fff;border-bottom:1px solid #d9d9d9"></div>
<div class="a" style="left:685px;top:648px;width:438px;height:26px;background:#e0e0e0;border-bottom:1px solid #d4d4d4"></div>
<div class="a" style="left:14px;top:673px;width:19px;height:1px;background:#505050"></div>
<div class="a" style="left:179px;top:648px;width:1px;height:26px;background:#d9d9d9"></div>
<div class="a" style="left:323px;top:648px;width:1px;height:26px;background:#d9d9d9"></div>
<div class="a" style="left:415px;top:648px;width:1px;height:26px;background:#d9d9d9"></div>
<div class="a" style="left:551px;top:648px;width:1px;height:26px;background:#d9d9d9"></div>
<div class="a" style="left:685px;top:648px;width:1px;height:26px;background:#d9d9d9"></div>
<div class="a" style="left:799px;top:648px;width:1px;height:26px;background:#d9d9d9"></div>
<div class="a" style="left:945px;top:648px;width:1px;height:26px;background:#d9d9d9"></div>
<div class="a" style="left:1123px;top:648px;width:1px;height:26px;background:#d9d9d9"></div>
<div class="a" style="left:1194px;top:648px;width:1px;height:26px;background:#d9d9d9"></div>
<div class="a" style="left:33px;top:520px;width:1px;height:154px;background:#4c4c4c"></div>
<div class="a" style="left:20px;top:657px;border-top:4px solid transparent;border-bottom:4px solid transparent;border-left:4px solid #d8d8d8"></div>
<div class="dotsv" style="left:1304px;top:454px;height:497px;background-image:linear-gradient(#6a6a6a 2px,transparent 2px)"></div>
<div class="dotsv" style="left:1293px;top:695px;height:18px;width:2px;background-image:linear-gradient(#555 50%,transparent 50%);background-size:2px 3px"></div>
<div class="page" style="left:1319px;top:481px;width:583px;height:466px"></div>
<div class="a" style="left:1322px;top:454px;width:116px;height:28px;background:#fff;border:1px solid #555;border-bottom:none;border-radius:2px 2px 0 0"></div>
<div class="t" style="left:1332px;top:461px;color:#2a2a3a">Purchase Order</div>
<div class="flbl " style="left:1332px;top:501px;height:25px;line-height:25px">Shipping:</div>
<div class="fld" style="left:1464px;top:501px;width:425px;height:25px;text-align:right;padding-right:25px;border-color:#7c7c7c">$0.00<div class="spin" style="width:21px;background:linear-gradient(#b6b6b6,#a2a2a2);border-left-color:#757575"></div></div>
<svg class="a" style="left:1873px;top:506px" width="12" height="18" viewBox="0 0 12 18"><path d="M3 6.5 H9 L6 3.5Z M3 13 H9 L6 16Z" fill="#4e4e4e"/><path d="M3 7.3 H9" stroke="#c8c8c8" stroke-width="0.8"/></svg>
<div class="flbl " style="left:1332px;top:531px;height:25px;line-height:25px">Tax:</div>
<div class="fld" style="left:1464px;top:531px;width:425px;height:25px;text-align:right;padding-right:25px;border-color:#7c7c7c">$0.00<div class="spin" style="width:21px;background:linear-gradient(#b6b6b6,#a2a2a2);border-left-color:#757575"></div></div>
<svg class="a" style="left:1873px;top:536px" width="12" height="18" viewBox="0 0 12 18"><path d="M3 6.5 H9 L6 3.5Z M3 13 H9 L6 16Z" fill="#4e4e4e"/><path d="M3 7.3 H9" stroke="#c8c8c8" stroke-width="0.8"/></svg>
<div class="dotsh" style="left:1331px;top:578px;width:558px"></div>
<div class="flbl " style="left:1332px;top:586px;height:25px;line-height:25px">Order Cost Total:</div>
<div class="fld fldd" style="left:1464px;top:586px;width:425px;height:25px;text-align:right;padding-right:25px;border-color:#7c7c7c">$0.00<div class="spin" style="width:21px;border-left-color:#8a8a8a"></div></div>
<svg class="a" style="left:1873px;top:591px" width="12" height="18" viewBox="0 0 12 18"><path d="M3 6.5 H9 L6 3.5Z M3 13 H9 L6 16Z" fill="#b0b0b0"/><path d="M3 7.3 H9" stroke="#e4e4e4" stroke-width="0.8"/></svg>
<div class="flbl " style="left:1332px;top:616px;height:25px;line-height:25px">Received Cost Total:</div>
<div class="fld fldd" style="left:1464px;top:616px;width:425px;height:25px;text-align:right;padding-right:25px;border-color:#7c7c7c">$0.00<div class="spin" style="width:21px;border-left-color:#8a8a8a"></div></div>
<svg class="a" style="left:1873px;top:621px" width="12" height="18" viewBox="0 0 12 18"><path d="M3 6.5 H9 L6 3.5Z M3 13 H9 L6 16Z" fill="#b0b0b0"/><path d="M3 7.3 H9" stroke="#e4e4e4" stroke-width="0.8"/></svg>
<div class="a" style="left:1333px;top:650px;width:17px;height:17px;border:2px solid #858585;background:#fff"><div class="a" style="left:1px;top:1px;width:11px;height:11px;background:linear-gradient(135deg,#cfcfcf,#ececec)"></div></div>
<div class="t" style="left:1355px;top:651px;color:#383838">Received</div>
<div class="dotsh" style="left:1331px;top:791px;width:558px"></div>
<div class="grp" style="left:1332px;top:798px;width:557px;height:135px"><div class="grph" style="padding-left:14px;height:25px;line-height:25px">Accounts Payable</div></div>
<div class="flbl wl" style="left:1346px;top:837px;height:24px;line-height:24px">Total Due:</div>
<div class="fld fldd" style="left:1478px;top:836px;width:396px;height:25px;text-align:right;padding-right:25px;border-color:#676767">$0.00<div class="spin" style="width:21px;border-left-color:#8a8a8a"></div></div>
<svg class="a" style="left:1858px;top:841px" width="12" height="18" viewBox="0 0 12 18"><path d="M3 6.5 H9 L6 3.5Z M3 13 H9 L6 16Z" fill="#b0b0b0"/><path d="M3 7.3 H9" stroke="#e4e4e4" stroke-width="0.8"/></svg>
<div class="flbl wl" style="left:1346px;top:867px;height:24px;line-height:24px">Total Paid:</div>
<div class="fld fldd" style="left:1478px;top:866px;width:396px;height:25px;text-align:right;padding-right:25px;border-color:#676767"><div class="spin" style="width:21px;border-left-color:#8a8a8a"></div></div>
<svg class="a" style="left:1858px;top:871px" width="12" height="18" viewBox="0 0 12 18"><path d="M3 6.5 H9 L6 3.5Z M3 13 H9 L6 16Z" fill="#b0b0b0"/><path d="M3 7.3 H9" stroke="#e4e4e4" stroke-width="0.8"/></svg>
<div class="a" style="left:1479px;top:900px;width:16px;height:16px;border:1px solid #555;background:#e6e6e6"><div class="a" style="left:1px;top:1px;width:12px;height:12px;border:1px solid #bdbdbd;background:linear-gradient(135deg,#d6d6d6,#ececec)"></div></div>
<div class="t" style="left:1500px;top:901px;color:#f2f2f2">Exported to QuickBooks</div>
</body></html>
